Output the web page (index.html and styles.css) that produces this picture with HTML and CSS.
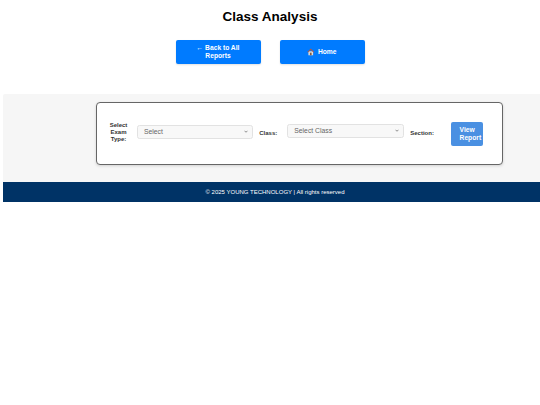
FILE: index.html
```html
<!DOCTYPE html>
<html lang="en">
<head>
<meta charset="utf-8">
<title>Class Analysis</title>
<link rel="stylesheet" href="styles.css">
</head>
<body>
<header class="top">
  <h1 class="title">Class Analysis</h1>
  <nav class="nav">
    <a class="nav-btn" href="#">← Back to All Reports</a>
    <a class="nav-btn" href="#">
      <svg class="home-icon" viewBox="0 0 16 16" aria-hidden="true">
        <rect x="3" y="7" width="10" height="8.500" fill="#e4dcd2"/>
        <path d="M0.500 8.500 8 1l7.500 7.500-1.500 1L8 4 2 9.500z" fill="#a85a4c"/>
        <rect x="6.200" y="10" width="3.600" height="5.500" fill="#7d5a44"/>
      </svg>
      Home
    </a>
  </nav>
</header>
<main class="panel">
  <form class="card">
    <label class="lbl lbl-exam">Select Exam Type:</label>
    <select class="sel sel-exam"><option>Select</option></select>
    <label class="lbl lbl-class">Class:</label>
    <select class="sel sel-class"><option>Select Class</option></select>
    <label class="lbl lbl-section">Section:</label>
    <button class="view-btn" type="button">View Report</button>
  </form>
</main>
<footer class="footer">© 2025 YOUNG TECHNOLOGY | All rights reserved</footer>
</body>
</html>
```
FILE: styles.css
```css
* { box-sizing: border-box; }
html, body { margin: 0; padding: 0; background: #fff; overflow: hidden; }
body { width: 540px; height: 405px; font-family: "Liberation Sans", Arial, sans-serif; color: #000; }
.top { height: 94px; display: flex; flex-direction: column; align-items: center; }
.title { margin: 8px 0 0; font-size: 13.500px; line-height: 17px; font-weight: 700; color: #000; }
.nav { display: flex; gap: 19px; margin-top: 15px; }
.nav-btn {
  width: 85px; height: 24px; display: flex; align-items: center; justify-content: center; gap: 3px;
  padding: 0 10px; background: #007bff; color: #fff; border-radius: 2px; text-decoration: none;
  font-size: 6.700px; line-height: 8px; font-weight: 700; text-align: center;
  box-shadow: 0 1px 2px rgba(0,0,0,.12);
}
.home-icon { width: 7.500px; height: 7.500px; flex: none; }
.panel {
  margin-left: 3px; height: 88px; padding: 8px 0 0 93px;
  background: #f6f6f6; border-radius: 2px 0 0 0;
}
.card {
  width: 406.500px; height: 62.500px; display: flex; align-items: center; padding: 0 19px 0 11px;
  background: #fff; border: 0.75px solid #666; border-radius: 4px;
  box-shadow: 0 1px 3px rgba(0,0,0,.15);
}
.lbl { font-size: 6px; line-height: 7px; font-weight: 700; color: #333; text-align: center; }
.lbl-exam { width: 21px; flex: none; margin-top: -2px; }
.lbl-class { margin-left: 6px; width: 18px; flex: none; }
.lbl-section { margin-left: 5.500px; width: 25px; flex: none; }
.sel {
  height: 13.500px; padding: 0 3px 0 6px; font-family: inherit; font-size: 6.800px; color: #666;
  appearance: none;
  background: #f8f8f8 url("data:image/svg+xml,%3Csvg xmlns='http://www.w3.org/2000/svg' viewBox='0 0 8 6'%3E%3Cpath d='M1 1.500 4 4.500 7 1.500' fill='none' stroke='%23555' stroke-width='1.300'/%3E%3C/svg%3E") no-repeat right 4px center / 4px 3px;
  border: 0.5px solid #e2e2e2; border-radius: 2.500px;
}
.sel-exam { width: 116.500px; margin-left: 8px; margin-top: -3px; }
.sel-class { width: 117px; margin-left: 10px; margin-top: -5px; }
.view-btn {
  width: 32px; height: 24px; margin-left: 16px; margin-top: 1px; padding: 0 0 0 9px; text-align: left;
  background: #4a90e2; color: #fff; border: 0; border-radius: 2px;
  font-family: inherit; font-size: 6.700px; line-height: 8px; font-weight: 700;
}
.footer {
  margin-left: 3px; height: 20px; padding-left: 7px; display: flex; align-items: center; justify-content: center;
  background: #003366; color: #fff; font-size: 6px;
}
```
